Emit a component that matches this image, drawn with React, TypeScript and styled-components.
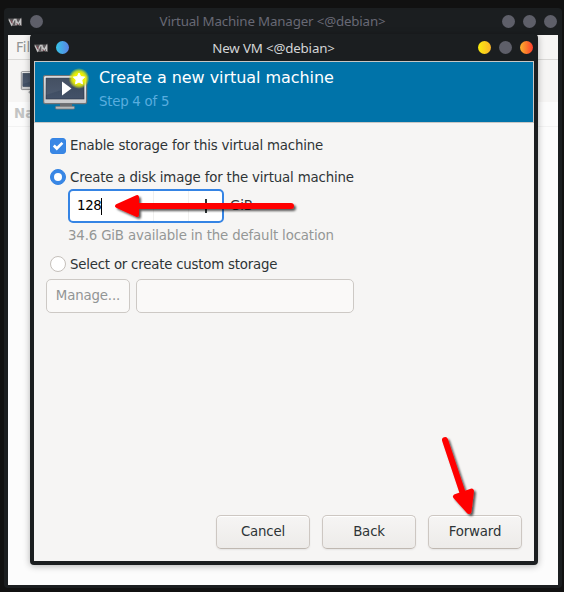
import React from "react";
import styled, { createGlobalStyle } from "styled-components";

const GlobalStyle = createGlobalStyle`
  * { box-sizing: border-box; }
  body { margin: 0; background: #111111; overflow: hidden; }
`;

const uiFont = `"DejaVu Sans", sans-serif`;
const titleFont = `"Noto Sans", sans-serif`;

const Desktop = styled.div`
  position: relative;
  width: 564px;
  height: 592px;
  padding: 8px 2px 4px 4px;
  background: #111111;
  overflow: hidden;
`;

const ManagerWindow = styled.section`
  display: flex;
  flex-direction: column;
  height: 580px;
  padding: 0 4px 3px;
  border-radius: 4px;
  background: #1b1e20;
`;

const TitleBar = styled.header<{ $active?: boolean }>`
  display: grid;
  grid-template-columns: 60px 1fr 60px;
  align-items: center;
  flex: none;
  height: 27px;
  color: ${(p) => (p.$active ? "#d3d5d7" : "#686975")};
  font: 13.33px/${(p) => (p.$active ? 26 : 25)}px ${titleFont};
  letter-spacing: -0.17px;
`;

const TitleSide = styled.div<{ $end?: boolean }>`
  display: flex;
  align-items: center;
  gap: ${(p) => (p.$end ? "8px" : "7px")};
  justify-content: ${(p) => (p.$end ? "flex-end" : "flex-start")};
  padding-right: ${(p) => (p.$end ? "1px" : "0")};
`;

const TitleText = styled.h1`
  margin: 0;
  padding-right: 21px;
  font: inherit;
  white-space: nowrap;
  text-align: center;
`;

const Dot = styled.span<{ $fill?: string }>`
  width: 13px;
  height: 13px;
  border-radius: 50%;
  background: ${(p) => p.$fill ?? "#5e5f69"};
`;

const MenuBar = styled.nav`
  flex: none;
  height: 25px;
  padding-left: 8px;
  border-bottom: 1px solid #d9d8d6;
  background: #f6f5f4;
  color: #929595;
  font: 13.33px/25px ${uiFont};
`;

const Toolbar = styled.div`
  display: flex;
  flex: none;
  height: 42px;
  padding: 10px 0 0 11px;
  background: #f6f5f4;
`;

const ColumnHead = styled.div`
  flex: none;
  height: 25px;
  padding-left: 6px;
  border-bottom: 1px solid #f2f2f2;
  background: #fcfcfc;
  color: #c3c4c4;
  font: bold 13.33px/23px ${uiFont};
`;

const MachineList = styled.div`
  flex: 1;
  background: #fcfcfc;
`;

const Dialog = styled.section`
  position: absolute;
  left: 30px;
  top: 34px;
  display: flex;
  flex-direction: column;
  width: 508px;
  height: 531px;
  padding: 0 4px 4px;
  border-radius: 4px;
  background: #1b1e20;
  box-shadow: 0 1px 7px rgba(0, 0, 0, 0.3);
`;

const Banner = styled.div`
  display: flex;
  flex: none;
  height: 62px;
  border: 1px solid #c9c7c5;
  background: #0073a9;
`;

const BannerIcon = styled.div`
  flex: none;
  width: 64px;
  height: 60px;
`;

const BannerText = styled.div`
  display: flex;
  flex-direction: column;
  padding-top: 4px;
  font-family: ${uiFont};
  white-space: nowrap;
`;

const Heading = styled.h2`
  margin: 0;
  color: #ffffff;
  font-size: 16px;
  font-weight: 400;
  line-height: 24px;
  letter-spacing: -0.05px;
`;

const Step = styled.span`
  color: #59addf;
  font-size: 13.33px;
  line-height: 24px;
  letter-spacing: -0.25px;
`;

const Form = styled.main`
  display: flex;
  flex: 1;
  flex-direction: column;
  padding: 14px 10px 12px 12px;
  background: #f6f5f4;
  color: #2e3436;
  font: 13.33px/18px ${uiFont};
  letter-spacing: -0.155px;
  white-space: nowrap;
`;

const Choice = styled.label<{ $gap?: number }>`
  display: flex;
  align-items: center;
  gap: 4px;
  height: 18px;
  padding-left: 4px;
  margin-bottom: ${(p) => p.$gap ?? 0}px;
`;

const ChoiceText = styled.span<{ $drop?: boolean; $track?: number }>`
  padding-top: ${(p) => (p.$drop ? 2 : 0)}px;
  letter-spacing: ${(p) => p.$track ?? -0.155}px;
`;

const Mark = styled.span<{ $kind: "check" | "on" | "off" }>`
  display: flex;
  align-items: center;
  justify-content: center;
  width: 16px;
  height: 16px;
  margin-bottom: ${(p) => (p.$kind === "off" ? 2 : 0)}px;
  border: 1px solid ${(p) => (p.$kind === "off" ? "#c5c0bb" : "#3584e4")};
  border-radius: ${(p) => (p.$kind === "check" ? "3px" : "50%")};
  background: ${(p) => (p.$kind === "off" ? "#ffffff" : "#3987e5")};
`;

const RadioCore = styled.span`
  width: 8px;
  height: 8px;
  border-radius: 50%;
  background: #ffffff;
`;

const SizeRow = styled.div`
  display: flex;
  align-items: center;
  gap: 6px;
  height: 34px;
  margin: 3px 0 4px 22px;
`;

const Spinner = styled.div`
  display: flex;
  width: 156px;
  height: 34px;
  border: 2px solid #3584e4;
  border-radius: 5px;
  background: #ffffff;
  color: #000000;
`;

const Amount = styled.span`
  display: flex;
  align-items: center;
  flex: 1;
  padding-left: 7px;
  letter-spacing: -0.35px;
`;

const Caret = styled.i`
  width: 1px;
  height: 17px;
  background: #000000;
`;

const StepButton = styled.span<{ $width: number }>`
  display: flex;
  align-items: center;
  justify-content: center;
  width: ${(p) => p.$width}px;
  border-left: 1px solid #f0f0ef;
`;

const Hint = styled.div`
  margin: 0 0 11px 22px;
  color: #949796;
`;

const StorageRow = styled.div`
  display: flex;
  gap: 6px;
  margin-top: 5px;
`;

const Disabled = styled.div<{ $width: number }>`
  width: ${(p) => p.$width}px;
  height: 34px;
  border: 1px solid #cdc9c5;
  border-radius: 5px;
  background: #faf9f8;
  color: #929595;
  line-height: 32px;
  text-align: center;
`;

const Actions = styled.footer`
  display: flex;
  justify-content: flex-end;
  gap: 12px;
  margin-top: auto;
  padding-right: 2px;
`;

const Button = styled.button`
  width: 94px;
  height: 34px;
  padding: 0;
  border: 1px solid #cdc7c2;
  border-bottom-color: #bfb8b1;
  border-radius: 5px;
  background: linear-gradient(#f6f5f4, #edebe9);
  box-shadow: inset 0 1px #ffffff, 0 1px 2px rgba(0, 0, 0, 0.07);
  color: #2e3436;
  font: 13.33px/18px ${uiFont};
  letter-spacing: -0.155px;
`;

const Annotation = styled.svg`
  position: absolute;
  inset: 0;
  pointer-events: none;
`;

const VmLogo = () => (
  <svg width="15" height="10" viewBox="0 0 15 10" fill="none">
    <path d="M0 1.500h14V9h-2.500L10 8 8.500 9H3z" fill="#5d595b" />
    <path d="M1 2.500 3.700 8l2.600-5.500H8V8M8 3.200 10.200 7l2.300-4v5" stroke="#c4c4c4" strokeWidth="1.300" />
    <path d="m3 3 1.500 3.500M9 6.500 10 8" stroke="#8f4553" strokeWidth=".8" />
  </svg>
);

const MonitorIcon = ({ width = 64, height = 60, view = "0 0 64 60", star = true }) => (
  <svg width={width} height={height} viewBox={view}>
    <defs>
      <linearGradient id="screen" x2="0" y2="1">
        <stop stopColor="#394659" /><stop offset="1" stopColor="#445269" />
      </linearGradient>
      <linearGradient id="frame" x2="0" y2="1">
        <stop stopColor="#fcfcfc" /><stop offset="1" stopColor="#c8c8ca" />
      </linearGradient>
      <radialGradient id="glow">
        <stop offset=".5" stopColor="#f0f200" /><stop offset=".72" stopColor="#e2ec10" stopOpacity=".8" />
        <stop offset="1" stopColor="#d6ea20" stopOpacity="0" />
      </radialGradient>
    </defs>
    <path d="M25 41h12v4H25z" fill="#6b6d70" />
    <rect x="20.5" y="44.3" width="19" height="2.8" rx="1" fill="#b7b8b9" stroke="#727579" strokeWidth=".8" />
    <rect x="8.6" y="13.6" width="43" height="28" rx="1.5" fill="url(#frame)" stroke="#707276" strokeWidth="1.2" />
    <rect x="11" y="16" width="38" height="21" fill="url(#screen)" stroke="#293445" strokeWidth=".6" />
    <path d="M11 16h38v5L11 33z" fill="#fff" opacity=".06" />
    {star && (
      <>
        <path d="M27 19.5v14l9.500-7z" fill="#fff" />
        <circle cx="44" cy="16.5" r="10.5" fill="url(#glow)" />
        <path d="m44 11 1.700 3.600 4 .5-2.900 2.800.7 4-3.500-1.900-3.500 1.900.7-4-2.900-2.800 4-.5z" fill="#fff" stroke="#fff" strokeWidth="1" strokeLinejoin="round" />
      </>
    )}
  </svg>
);

export default function App() {
  return (
    <Desktop>
      <GlobalStyle />
      <ManagerWindow>
        <TitleBar>
          <TitleSide><VmLogo /><Dot /></TitleSide>
          <TitleText>Virtual Machine Manager &lt;@debian&gt;</TitleText>
          <TitleSide $end><Dot /><Dot /><Dot /></TitleSide>
        </TitleBar>
        <MenuBar>File</MenuBar>
        <Toolbar><MonitorIcon width={32} height={26} view="5 11 50 40.600" star={false} /></Toolbar>
        <ColumnHead>Name</ColumnHead>
        <MachineList />
      </ManagerWindow>

      <Dialog>
        <TitleBar $active>
          <TitleSide><VmLogo /><Dot $fill="linear-gradient(90deg, #36c5e8, #5b82e4)" /></TitleSide>
          <TitleText>New VM &lt;@debian&gt;</TitleText>
          <TitleSide $end>
            <Dot $fill="linear-gradient(90deg, #f9ed0e, #fbb42a)" />
            <Dot />
            <Dot $fill="linear-gradient(90deg, #fbb32c, #ff3d2d)" />
          </TitleSide>
        </TitleBar>
        <Banner>
          <BannerIcon><MonitorIcon /></BannerIcon>
          <BannerText>
            <Heading>Create a new virtual machine</Heading>
            <Step>Step 4 of 5</Step>
          </BannerText>
        </Banner>
        <Form>
          <Choice $gap={13}>
            <Mark $kind="check">
              <svg width="14" height="14" viewBox="0 0 14 14" fill="none">
                <path d="m2.8 6.500 3 3 5.600-5.600" stroke="#fff" strokeWidth="2.700" />
              </svg>
            </Mark>
            <ChoiceText $track={-0.17}>Enable storage for this virtual machine</ChoiceText>
          </Choice>
          <Choice>
            <Mark $kind="on"><RadioCore /></Mark>
            <ChoiceText $drop>Create a disk image for the virtual machine</ChoiceText>
          </Choice>
          <SizeRow>
            <Spinner>
              <Amount>128<Caret /></Amount>
              <StepButton $width={35}>
                <svg width="12" height="14"><path d="M1 7.5h10" stroke="#2e3436" strokeWidth="2" /></svg>
              </StepButton>
              <StepButton $width={34}>
                <svg width="12" height="14"><path d="M1 7.5h10M6 0v14" stroke="#2e3436" strokeWidth="2" /></svg>
              </StepButton>
            </Spinner>
            GiB
          </SizeRow>
          <Hint>34.6 GiB available in the default location</Hint>
          <Choice>
            <Mark $kind="off" />
            <ChoiceText $track={-0.21}>Select or create custom storage</ChoiceText>
          </Choice>
          <StorageRow>
            <Disabled $width={84}>Manage...</Disabled>
            <Disabled $width={218} />
          </StorageRow>
          <Actions>
            <Button>Cancel</Button>
            <Button>Back</Button>
            <Button>Forward</Button>
          </Actions>
        </Form>
      </Dialog>

      <Annotation width="564" height="592" viewBox="0 0 564 592">
        <defs>
          <filter id="shadow" x="-20%" y="-100%" width="140%" height="300%">
            <feDropShadow dx="2" dy="2" stdDeviation="1.3" floodOpacity=".65" />
          </filter>
          <filter id="shadow2" x="-30%" y="-20%" width="170%" height="150%">
            <feDropShadow dx="2" dy="2" stdDeviation="1.3" floodOpacity=".65" />
          </filter>
        </defs>
        <g fill="#f00" stroke="#f00" strokeLinecap="round" strokeLinejoin="round" filter="url(#shadow)">
          <path d="M135 206H291" strokeWidth="6" />
          <path d="m117 206 20-9v18z" strokeWidth="4" />
        </g>
        <g fill="#f00" stroke="#f00" strokeLinecap="round" strokeLinejoin="round" filter="url(#shadow2)">
          <path d="m445 440 18 54" strokeWidth="6" />
          <path d="m469 511.500-13.500-15 16-5.500z" strokeWidth="5" />
        </g>
      </Annotation>
    </Desktop>
  );
}
